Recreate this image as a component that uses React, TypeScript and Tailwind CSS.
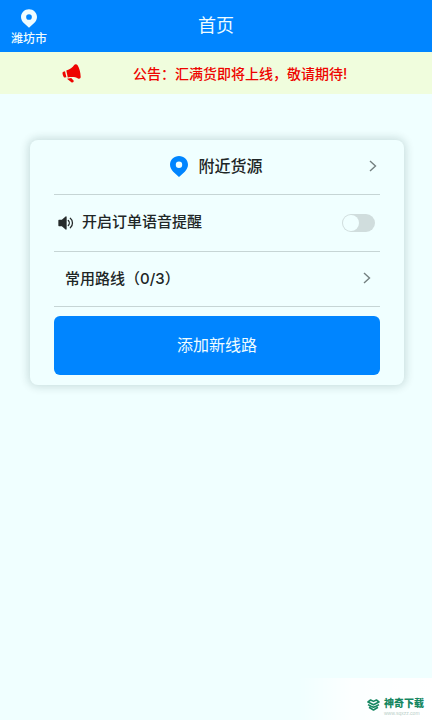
import { useState } from 'react';

function PinIcon({ className }: { className: string }) {
  return (
    <svg viewBox="0 0 18 21" className={className} fill="currentColor" fillRule="evenodd" aria-hidden="true">
      <path d="M9 0C4 0 0 3.900 0 8.700c0 2.900 1.600 5.100 3.200 7L9 21l5.800-5.300c1.600-1.900 3.200-4.100 3.200-7C18 3.900 14 0 9 0Zm0 5.600a3.200 3.200 0 1 1 0 6.400a3.200 3.200 0 0 1 0-6.400Z" />
    </svg>
  );
}

function MegaphoneIcon() {
  return (
    <svg viewBox="0 0 19 19" className="size-[19px] text-[#ee0400]" fill="currentColor" aria-hidden="true">
      <path d="M4.300 6.400C8 5.400 10.600 3.600 12.200 1C12.900 0 14.800 0 15.600 1.200C17.200 3.600 18.600 8.400 18.700 13C18.600 14.600 17.300 15 16 14.400C13.300 12.900 10 12.700 5.800 13.400Z" />
      <path d="M3 7.200L4.400 13.200L2.600 13.600C1.500 13.200 .1 9.600.6 8.400C.9 7.700 2 7.400 3 7.200Z" />
      <path d="M5 14.800L9.200 14.100L11.600 16.500C12 17.700 11 18.800 9.700 18.400Z" />
    </svg>
  );
}

function SpeakerIcon() {
  return (
    <svg viewBox="0 0 16 14" className="h-[14px] w-4 text-[#262b2b]" fill="none" stroke="currentColor" strokeWidth="1.300" strokeLinecap="round" aria-hidden="true">
      <path d="M1 4.500H4L8 1V13L4 9.500H1Z" fill="currentColor" strokeLinejoin="round" />
      <path d="M10.300 4.500C11.600 5.800 11.600 8.200 10.300 9.500M12.300 2.300C15.200 4.600 15.200 9.400 12.300 11.700" />
    </svg>
  );
}

function ChevronIcon() {
  return (
    <svg viewBox="0 0 8 12" className="h-3 w-2 text-[#748080]" fill="none" stroke="currentColor" strokeWidth="1.400" aria-hidden="true">
      <path d="M1 1L6.500 6L1 11" />
    </svg>
  );
}

function Watermark() {
  return (
    <aside className="absolute right-0 bottom-0 flex h-[42px] w-[134px] items-center justify-end gap-1 bg-linear-to-r from-transparent via-white/80 via-40% to-white pt-3 pr-2">
      <svg viewBox="0 0 13 12" className="h-3 w-[13px]" fill="none" stroke="#168761" strokeWidth="1.600" strokeLinejoin="round" aria-hidden="true">
        <path d="M6.500 2.400L3.600 1L1 3L6.500 5.700L12 3L9.400 1Z" />
        <path d="M1 5.600L4 7.200L6.500 8.300L9 7.200L12 5.600M2 8.200L6.500 11L11 8.200" />
      </svg>
      <div className="flex flex-col pt-0.5">
        <p className="text-[10px] leading-3 font-black text-[#168761]">神奇下载</p>
        <p className="pt-0.5 font-['Liberation_Sans',sans-serif] text-[5px] leading-[5px] text-[#b9cfc8]">www.sqxzz.com</p>
      </div>
    </aside>
  );
}

export default function App() {
  const [voice, setVoice] = useState(false);
  return (
    <div className="relative min-h-screen bg-[#f0ffff] font-['Noto_Sans_CJK_SC',sans-serif] text-[#202626]">
      <header className="grid h-[52px] grid-cols-[1fr_auto_1fr] items-center bg-[#0085ff] px-[11px] text-[#effcff]">
        <button type="button" className="flex flex-col items-center gap-0.5 justify-self-start pt-0.5">
          <PinIcon className="h-[19px] w-4" />
          <span className="text-xs leading-4 font-medium">潍坊市</span>
        </button>
        <h1 className="pb-1 text-lg leading-6 font-normal">首页</h1>
      </header>

      <section className="flex h-[42px] items-center bg-[#f0fddd] pl-[62px]">
        <MegaphoneIcon />
        <p className="flex-1 pl-[52px] text-sm leading-5 font-medium whitespace-nowrap text-[#ee0400]">公告：汇满货即将上线，敬请期待<span className="font-['Inter',sans-serif]">!</span></p>
      </section>

      <main className="pt-[46px] pr-7 pl-[30px]">
        <div className="rounded-lg px-6 pb-[10px] shadow-[0_0_8px_2px_rgba(0,50,50,0.16)]">
          <button type="button" className="flex h-[55px] w-full items-center border-b border-[#c6d5d5] pr-[3px] pb-0.5">
            <span className="flex flex-1 items-center justify-center gap-[10px] pl-[10px]">
              <PinIcon className="h-[21px] w-[18px] text-[#0085ff]" />
              <span className="pb-0.5 text-base leading-6 font-medium">附近货源</span>
            </span>
            <ChevronIcon />
          </button>

          <div className="flex h-[57px] items-center border-b border-[#c6d5d5] pr-[5px] pl-1">
            <SpeakerIcon />
            <label htmlFor="voice" className="flex-1 pb-1 pl-2 text-[15px] leading-6 font-medium">开启订单语音提醒</label>
            <input
              id="voice"
              type="checkbox"
              role="switch"
              checked={voice}
              onChange={(e) => setVoice(e.target.checked)}
              className="h-[18px] w-[33px] appearance-none rounded-full bg-[#d0dddd] p-px before:block before:size-4 before:rounded-full before:bg-[#f0ffff] checked:bg-[#0085ff] checked:before:ml-auto"
            />
          </div>

          <button type="button" className="flex h-[55px] w-full items-center justify-between border-b border-[#c6d5d5] pr-[9px] pb-0.5 pl-[11px]">
            <span className="text-[15px] leading-6 font-medium">常用路线（<span className="font-['Inter',sans-serif]">0/3</span>）</span>
            <ChevronIcon />
          </button>

          <button type="button" className="mt-[9px] h-[59px] w-full rounded-md bg-[#0085ff] pb-1 text-base leading-6 text-[#effcff]">
            添加新线路
          </button>
        </div>
      </main>
      <Watermark />
    </div>
  );
}
